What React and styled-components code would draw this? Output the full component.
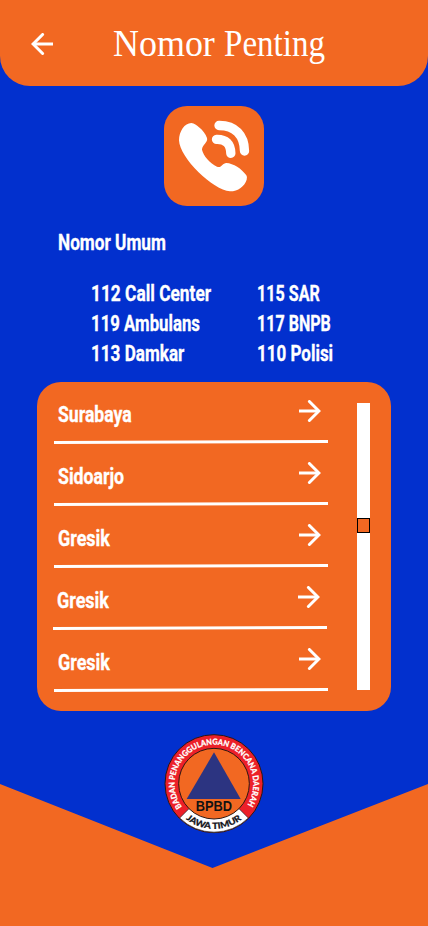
import React, { useLayoutEffect, useRef } from "react";
import styled, { createGlobalStyle } from "styled-components";

const ORANGE = "#f26822";
const BLUE = "#0230ce";

const GlobalStyle = createGlobalStyle`
  *, *::before, *::after { box-sizing: border-box; }
  html, body { margin: 0; padding: 0; background: ${BLUE}; }
`;

const Screen = styled.main`
  display: flex;
  flex-direction: column;
  width: 428px;
  height: 926px;
  overflow: hidden;
  background: ${BLUE};
  color: #fff;
  font: 700 22.8px/30px Roboto, "Liberation Sans", sans-serif;
  -webkit-text-stroke: 0.35px currentColor;
`;

const Header = styled.header`
  display: flex;
  align-items: center;
  height: 86px;
  padding: 2px 0 0 31px;
  gap: 60px;
  background: ${ORANGE};
  border-radius: 0 0 30px 30px;
`;

const BackButton = styled.button`
  display: flex;
  padding: 0;
  border: 0;
  background: none;
  color: inherit;
`;

const Title = styled.h1`
  display: flex;
  gap: 9px;
  margin: 0;
  font: 400 37px/44px "Liberation Serif", serif;
  -webkit-text-stroke: 0;
`;

const ArrowSvg = styled.svg`
  display: block;
  width: 22px;
  height: 22px;
  transform: ${(p) => (p.$back ? "scaleX(-1)" : "none")};
`;

const FitBox = styled.span`
  display: block;
  width: ${(p) => p.$width}px;
  white-space: nowrap;
`;

const FitInner = styled.span`
  display: inline-block;
  transform-origin: 0 50%;
`;

const CallTile = styled.div`
  align-self: center;
  width: 100px;
  height: 100px;
  margin-top: 20px;
  flex: none;
  background: ${ORANGE};
  border-radius: 23px;
`;

const General = styled.section`
  padding: 22px 0 0 58px;
`;

const SectionTitle = styled.h2`
  margin: 0;
  font: inherit;
`;

const Numbers = styled.div`
  display: grid;
  grid-template-columns: 166px 1fr;
  grid-auto-rows: 30px;
  padding: 21px 0 0 33px;
`;

const Card = styled.section`
  display: flex;
  justify-content: space-between;
  flex: none;
  width: 354px;
  height: 329px;
  margin: 13px 0 0 37px;
  padding: 0 21px 0 17px;
  background: ${ORANGE};
  border-radius: 24px;
`;

const CityList = styled.ul`
  width: 274px;
  margin: 0;
  padding: 0;
  list-style: none;
`;

const City = styled.li`
  display: flex;
  flex-direction: column;
  justify-content: space-between;
  height: 62px;
  margin-left: ${(p) => (p.$shifted ? "-1px" : "0")};
  width: 274px;
`;

const CityRow = styled.div`
  display: flex;
  justify-content: space-between;
  align-items: flex-start;
  padding: 18px 7px 0 4px;
  height: 52px;
`;

const Rule = styled.svg`
  display: block;
  width: 274px;
  height: 4px;
`;

const Track = styled.div`
  width: 13px;
  height: 287px;
  margin-top: 21px;
  padding-top: 115px;
  background: #fff;
`;

const Thumb = styled.div`
  height: 15px;
  background: ${ORANGE};
  border: 1px solid #000;
`;

const Footer = styled.footer`
  position: relative;
  flex: 1;
  display: flex;
  justify-content: center;
  align-items: flex-start;
  padding-top: 23px;
  -webkit-text-stroke: 0;

  &::before {
    content: "";
    position: absolute;
    inset: 73px 0 0;
    background: ${ORANGE};
    clip-path: polygon(0 0, 212.5px 84px, 100% 0, 100% 100%, 0 100%);
  }
`;

const Emblem = styled.svg`
  position: relative;
  width: 100px;
  height: 100px;
`;

function FitText({ width, children }) {
  const ref = useRef(null);
  useLayoutEffect(() => {
    const el = ref.current;
    el.style.transform = `scaleX(${width / el.offsetWidth})`;
  }, [width, children]);
  return (
    <FitBox $width={width}>
      <FitInner ref={ref}>{children}</FitInner>
    </FitBox>
  );
}

function Arrow({ back }) {
  return (
    <ArrowSvg $back={back} viewBox="0 0 22 22" fill="none" stroke="#fff" strokeWidth="3">
      <path d="M0 11H20" />
      <path d="M10.400 1.500L19.900 11L10.400 20.500" strokeLinecap="round" />
    </ArrowSvg>
  );
}

function CallIcon() {
  return (
    <svg width="100" height="100" viewBox="-30 -30 300 300" fill="none">
      <path
        fill="#fff"
        d="M15 73C15 46 32 21 52 21C61 21 68 28 75 34C86 43 95 54 99 66C103 79 84 87 84 101C88 119 108 142 129 152C142 158 145 141 157 141C178 142 203 158 217 178Q221 184 218 191C211 211 193 226 168 226C117 223 17 126 15 73Z"
      />
      <g stroke="#fff" strokeWidth="28" strokeLinecap="round">
        <path d="M135 28.500C183 28 211 58 211.500 105" />
        <path d="M127.500 70C155 69 170 83 170.500 112" />
      </g>
    </svg>
  );
}

function BpbdEmblem() {
  return (
    <Emblem viewBox="30 30 300 300" fontFamily="Lato, 'Liberation Sans', sans-serif">
      <defs>
        <path id="ringTop" d="M84 248.500A118 118 0 1 1 276 248.500" />
        <path id="ringBottom" d="M93 283A135 135 0 0 0 267 283" />
      </defs>
      <circle cx="180" cy="179" r="147" fill="#ec2029" stroke="#2b1712" strokeWidth="3" />
      <path d="M180 179L77 282A146 146 0 0 0 283 282Z" fill="#fff" stroke="#1b1b22" strokeWidth="2" />
      <circle cx="180" cy="179" r="106" fill={ORANGE} stroke="#2b1712" strokeWidth="3" />
      <path d="M180 85L260 225H98Z" fill="#2c3481" />
      <text x="125" y="260" fontFamily="Liberation Sans, sans-serif" fontSize="42" fontWeight="700" fill="#121212" textLength="109" lengthAdjust="spacingAndGlyphs">BPBD</text>
      <text fontSize="24.5" fontWeight="900" fill="#fff" stroke="#fff" strokeWidth="0.6">
        <textPath href="#ringTop" textLength="510" lengthAdjust="spacingAndGlyphs">BADAN PENANGGULANGAN BENCANA DAERAH</textPath>
      </text>
      <text fontSize="26" fontWeight="900" fill="#16161c" stroke="#16161c" strokeWidth="0.6">
        <textPath href="#ringBottom" startOffset="3" textLength="181" lengthAdjust="spacingAndGlyphs">JAWA TIMUR</textPath>
      </text>
    </Emblem>
  );
}

const numbers = [
  ["112 Call Center", 120],
  ["115 SAR", 63],
  ["119 Ambulans", 109],
  ["117 BNPB", 74],
  ["113 Damkar", 93],
  ["110 Polisi", 76],
];

const cities = [
  { name: "Surabaya", width: 73.5 },
  { name: "Sidoarjo", width: 66 },
  { name: "Gresik", width: 52 },
  { name: "Gresik", width: 52, shifted: true },
  { name: "Gresik", width: 52 },
];

export default function App() {
  return (
    <Screen>
      <GlobalStyle />
      <Header>
        <BackButton aria-label="Kembali">
          <Arrow back />
        </BackButton>
        <Title>
          <FitText width={102}>Nomor</FitText>
          <FitText width={101}>Penting</FitText>
        </Title>
      </Header>
      <CallTile>
        <CallIcon />
      </CallTile>
      <General>
        <SectionTitle>
          <FitText width={108}>Nomor Umum</FitText>
        </SectionTitle>
        <Numbers>
          {numbers.map(([label, width]) => (
            <FitText key={label} width={width}>{label}</FitText>
          ))}
        </Numbers>
      </General>
      <Card>
        <CityList>
          {cities.map((city, i) => (
            <City key={i} $shifted={city.shifted}>
              <CityRow>
                <FitText width={city.width}>{city.name}</FitText>
                <Arrow />
              </CityRow>
              <Rule viewBox="0 0 274 4">
                <path d="M0 2.500L274 1.500" stroke="#fff" strokeWidth="3" />
              </Rule>
            </City>
          ))}
        </CityList>
        <Track>
          <Thumb />
        </Track>
      </Card>
      <Footer>
        <BpbdEmblem />
      </Footer>
    </Screen>
  );
}
